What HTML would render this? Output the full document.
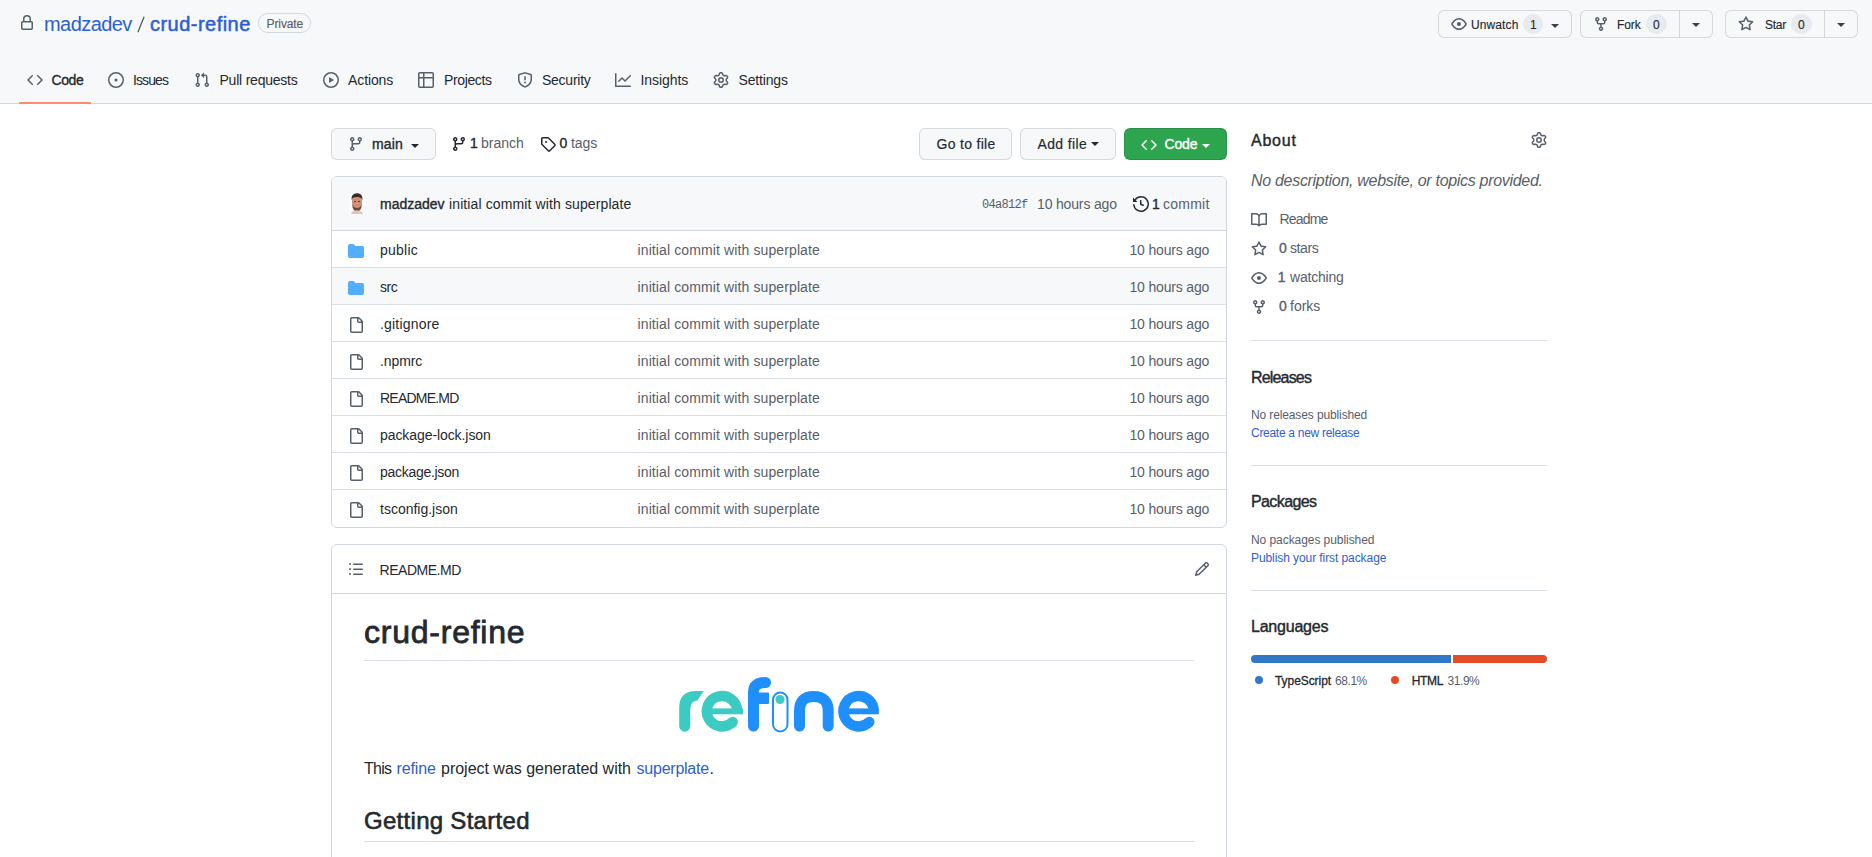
<!DOCTYPE html><html><head><meta charset="utf-8"><style>*{margin:0;padding:0}
html,body{width:1872px;height:857px;overflow:hidden;background:#fff}
body{position:relative;font-family:"Liberation Sans",sans-serif;color:#24292f}
.t{position:absolute;white-space:pre;line-height:1}
.b{position:absolute}
.i{position:absolute;overflow:visible}
</style></head><body><div class="b" style="left:0px;top:0px;width:1872px;height:103px;background:#f6f8fa"></div><div class="b" style="left:0px;top:103px;width:1872px;height:1px;background:#d0d7de"></div><svg class="i" style="left:19px;top:15px;width:16px;height:16px" viewBox="0 0 16 16" fill="#57606a"><path d="M4 4a4 4 0 0 1 8 0v2h.25c.966 0 1.75.784 1.75 1.75v5.5A1.75 1.75 0 0 1 12.25 15h-8.5A1.75 1.75 0 0 1 2 13.25v-5.5C2 6.784 2.784 6 3.75 6H4Zm8.25 3.5h-8.5a.25.25 0 0 0-.25.25v5.5c0 .138.112.25.25.25h8.5a.25.25 0 0 0 .25-.25v-5.5a.25.25 0 0 0-.25-.25ZM10.5 6V4a2.5 2.5 0 1 0-5 0v2Z"/></svg><span class="t" style="left:44.0px;top:14.1px;font-size:20px;color:#2c5fd2;letter-spacing:-0.569px;">madzadev</span><svg class="i" style="left:130px;top:10px;width:20px;height:30px" viewBox="130 10 20 30"><path d="M137.9 32.2 L144.1 16.8" stroke="#57606a" stroke-width="1.35"/></svg><span class="t" style="left:150.0px;top:14.1px;font-size:20px;color:#2c5fd2;-webkit-text-stroke:0.50px #2c5fd2;letter-spacing:0.469px;">crud-refine</span><div class="b" style="left:258px;top:13px;width:53px;height:20px;border:1px solid #d0d7de;border-radius:10px;box-sizing:border-box"></div><span class="t" style="left:266.5px;top:17.8px;font-size:12px;color:#57606a;-webkit-text-stroke:0.14px #57606a;letter-spacing:-0.093px;">Private</span><div class="b" style="left:1438px;top:10px;width:134px;height:28px;background:#f6f8fa;border:1px solid rgba(31,35,40,0.15);border-radius:6px;box-sizing:border-box"></div><svg class="i" style="left:1451px;top:16px;width:16px;height:16px" viewBox="0 0 16 16" fill="#57606a"><path d="M8 2c1.981 0 3.671.992 4.933 2.078 1.27 1.091 2.187 2.345 2.637 3.023a1.62 1.62 0 0 1 0 1.798c-.45.678-1.367 1.932-2.637 3.023C11.67 13.008 9.981 14 8 14c-1.981 0-3.671-.992-4.933-2.078C1.797 10.83.88 9.576.43 8.898a1.62 1.62 0 0 1 0-1.798c.45-.677 1.367-1.931 2.637-3.022C4.33 2.992 6.019 2 8 2ZM1.679 7.932a.12.12 0 0 0 0 .136c.411.622 1.241 1.75 2.366 2.717C5.176 11.758 6.527 12.5 8 12.5c1.473 0 2.825-.742 3.955-1.715 1.124-.967 1.954-2.096 2.366-2.717a.12.12 0 0 0 0-.136c-.412-.621-1.242-1.75-2.366-2.717C10.824 4.242 9.473 3.5 8 3.5c-1.473 0-2.825.742-3.955 1.715-1.124.967-1.954 2.096-2.366 2.717ZM8 10a2 2 0 1 1-.001-3.999A2 2 0 0 1 8 10Z"/></svg><span class="t" style="left:1471.0px;top:19.3px;font-size:12px;color:#24292f;-webkit-text-stroke:0.14px #24292f;letter-spacing:0.102px;">Unwatch</span><div class="b" style="left:1523px;top:14px;width:20px;height:20px;background:rgba(175,184,193,0.2);border-radius:10px"></div><span class="t" style="left:1530.0px;top:19.3px;font-size:12px;color:#24292f;-webkit-text-stroke:0.14px #24292f;">1</span><div class="b" style="left:1551px;top:23.5px;width:0;height:0;border-left:4.0px solid transparent;border-right:4.0px solid transparent;border-top:4.0px solid #3b4148"></div><div class="b" style="left:1580px;top:10px;width:133px;height:28px;background:#f6f8fa;border:1px solid rgba(31,35,40,0.15);border-radius:6px;box-sizing:border-box"></div><div class="b" style="left:1679px;top:11px;width:1px;height:26px;background:#d5d8db"></div><svg class="i" style="left:1593px;top:16px;width:16px;height:16px" viewBox="0 0 16 16" fill="#57606a"><path d="M5 5.372v.878c0 .414.336.75.75.75h4.5a.75.75 0 0 0 .75-.75v-.878a2.25 2.25 0 1 1 1.5 0v.878a2.25 2.25 0 0 1-2.25 2.25h-1.5v2.128a2.251 2.251 0 1 1-1.5 0V8.5h-1.5A2.25 2.25 0 0 1 3.5 6.25v-.878a2.25 2.250 0 1 1 1.5 0ZM5 3.25a.75.75 0 1 0-1.5 0 .75.75 0 0 0 1.5 0Zm6.75.75a.75.75 0 1 0 0-1.5.75.75 0 0 0 0 1.5Zm-3 8.75a.75.75 0 1 0-1.5 0 .75.75 0 0 0 1.5 0Z"/></svg><span class="t" style="left:1617.0px;top:19.3px;font-size:12px;color:#24292f;-webkit-text-stroke:0.14px #24292f;letter-spacing:-0.067px;">Fork</span><div class="b" style="left:1646px;top:14px;width:21px;height:20px;background:rgba(175,184,193,0.2);border-radius:10px"></div><span class="t" style="left:1653.0px;top:19.3px;font-size:12px;color:#24292f;-webkit-text-stroke:0.14px #24292f;">0</span><div class="b" style="left:1692px;top:22.6px;width:0;height:0;border-left:4.0px solid transparent;border-right:4.0px solid transparent;border-top:4.0px solid #3b4148"></div><div class="b" style="left:1725px;top:10px;width:133px;height:28px;background:#f6f8fa;border:1px solid rgba(31,35,40,0.15);border-radius:6px;box-sizing:border-box"></div><div class="b" style="left:1824px;top:11px;width:1px;height:26px;background:#d5d8db"></div><svg class="i" style="left:1738px;top:16px;width:16px;height:16px" viewBox="0 0 16 16" fill="#57606a"><path d="M8 .25a.75.75 0 0 1 .673.418l1.882 3.815 4.21.612a.75.75 0 0 1 .416 1.279l-3.046 2.97.719 4.192a.751.751 0 0 1-1.088.791L8 12.347l-3.766 1.98a.75.75 0 0 1-1.088-.79l.72-4.194L.818 6.374a.75.75 0 0 1 .416-1.28l4.21-.611L7.327.668A.75.75 0 0 1 8 .25Zm0 2.445L6.615 5.5a.75.75 0 0 1-.564.41l-3.097.45 2.24 2.184a.75.75 0 0 1 .216.664l-.528 3.084 2.769-1.456a.75.75 0 0 1 .698 0l2.770 1.456-.53-3.084a.75.75 0 0 1 .216-.664l2.24-2.183-3.096-.45a.75.75 0 0 1-.564-.41L8 2.694Z"/></svg><span class="t" style="left:1765.0px;top:19.3px;font-size:12px;color:#24292f;-webkit-text-stroke:0.14px #24292f;letter-spacing:-0.239px;">Star</span><div class="b" style="left:1791px;top:14px;width:21px;height:20px;background:rgba(175,184,193,0.2);border-radius:10px"></div><span class="t" style="left:1798.0px;top:19.3px;font-size:12px;color:#24292f;-webkit-text-stroke:0.14px #24292f;">0</span><div class="b" style="left:1837px;top:22.6px;width:0;height:0;border-left:4.0px solid transparent;border-right:4.0px solid transparent;border-top:4.0px solid #3b4148"></div><svg class="i" style="left:27px;top:72px;width:16px;height:16px" viewBox="0 0 16 16" fill="#57606a"><path d="m11.28 3.22 4.25 4.25a.75.75 0 0 1 0 1.06l-4.25 4.25a.749.749 0 0 1-1.275-.326.749.749 0 0 1 .215-.734L13.94 8l-3.72-3.72a.749.749 0 0 1 .326-1.275.749.749 0 0 1 .734.215Zm-6.56 0a.751.751 0 0 1 1.042.018.751.751 0 0 1 .018 1.042L2.06 8l3.72 3.72a.749.749 0 0 1-.326 1.275.749.749 0 0 1-.734-.215L.47 8.53a.75.75 0 0 1 0-1.06Z"/></svg><span class="t" style="left:51.5px;top:73.3px;font-size:14px;color:#24292f;-webkit-text-stroke:0.35px #24292f;letter-spacing:-0.390px;">Code</span><svg class="i" style="left:108px;top:72px;width:16px;height:16px" viewBox="0 0 16 16" fill="#57606a"><path d="M8 9.5a1.5 1.5 0 1 0 0-3 1.5 1.5 0 0 0 0 3ZM8 0a8 8 0 1 1 0 16A8 8 0 0 1 8 0ZM1.5 8a6.5 6.5 0 1 0 13 0 6.5 6.5 0 0 0-13 0Z"/></svg><span class="t" style="left:133.0px;top:73.3px;font-size:14px;color:#24292f;letter-spacing:-0.894px;">Issues</span><svg class="i" style="left:193.5px;top:72px;width:16px;height:16px" viewBox="0 0 16 16" fill="#57606a"><path d="M1.5 3.25a2.25 2.25 0 1 1 3 2.122v5.256a2.251 2.251 0 1 1-1.5 0V5.372A2.25 2.25 0 0 1 1.5 3.25Zm5.677-.177L9.573.677A.25.25 0 0 1 10 .854V2.5h1A2.5 2.5 0 0 1 13.5 5v5.628a2.251 2.251 0 1 1-1.5 0V5a1 1 0 0 0-1-1h-1v1.646a.25.25 0 0 1-.427.177L7.177 3.427a.25.25 0 0 1 0-.354ZM3.75 2.5a.75.75 0 1 0 0 1.5.75.75 0 0 0 0-1.5Zm0 9.5a.75.75 0 1 0 0 1.5.75.75 0 0 0 0-1.5Zm8.25.75a.75.75 0 1 0 1.5 0 .75.75 0 0 0-1.5 0Z"/></svg><span class="t" style="left:219.5px;top:73.3px;font-size:14px;color:#24292f;letter-spacing:-0.220px;">Pull requests</span><svg class="i" style="left:322.5px;top:72px;width:16px;height:16px" viewBox="0 0 16 16" fill="#57606a"><path d="M8 0a8 8 0 1 1 0 16A8 8 0 0 1 8 0ZM1.5 8a6.5 6.5 0 1 0 13 0 6.5 6.5 0 0 0-13 0Zm4.879-2.773 4.264 2.559a.25.25 0 0 1 0 .428l-4.264 2.559A.25.25 0 0 1 6 10.559V5.442a.25.25 0 0 1 .379-.215Z"/></svg><span class="t" style="left:348.0px;top:73.3px;font-size:14px;color:#24292f;letter-spacing:-0.104px;">Actions</span><svg class="i" style="left:418px;top:72px;width:16px;height:16px" viewBox="0 0 16 16" fill="#57606a"><path d="M0 1.75C0 .784.784 0 1.75 0h12.5C15.216 0 16 .784 16 1.75v12.5A1.75 1.75 0 0 1 14.25 16H1.75A1.75 1.75 0 0 1 0 14.25ZM6.5 6.5v8h7.75a.25.25 0 0 0 .25-.25V6.5Zm8-1.5V1.75a.25.25 0 0 0-.25-.25H6.5V5Zm-13 1.5v7.75c0 .138.112.25.25.25H5v-8ZM5 5V1.5H1.75a.25.25 0 0 0-.25.25V5Z"/></svg><span class="t" style="left:444.0px;top:73.3px;font-size:14px;color:#24292f;letter-spacing:-0.368px;">Projects</span><svg class="i" style="left:516.8px;top:72px;width:16px;height:16px" viewBox="0 0 16 16" fill="#57606a"><path d="M7.467.133a1.748 1.748 0 0 1 1.066 0l5.25 1.68A1.75 1.75 0 0 1 15 3.48V7c0 1.566-.32 3.182-1.303 4.682-.983 1.498-2.585 2.813-5.032 3.855a1.697 1.697 0 0 1-1.33 0c-2.447-1.042-4.049-2.357-5.032-3.855C1.32 10.182 1 8.566 1 7V3.48a1.755 1.755 0 0 1 1.217-1.667Zm.61 1.429a.25.25 0 0 0-.153 0l-5.25 1.68a.25.25 0 0 0-.174.238V7c0 1.358.275 2.666 1.057 3.86.784 1.194 2.121 2.34 4.366 3.297a.196.196 0 0 0 .154 0c2.245-.956 3.582-2.104 4.366-3.298C13.225 9.666 13.5 8.36 13.5 7V3.48a.251.251 0 0 0-.174-.237l-5.25-1.68ZM8.75 4.75v3a.75.75 0 0 1-1.5 0v-3a.75.75 0 0 1 1.5 0ZM9 10.5a1 1 0 1 1-2 0 1 1 0 0 1 2 0Z"/></svg><span class="t" style="left:542.0px;top:73.3px;font-size:14px;color:#24292f;letter-spacing:-0.254px;">Security</span><svg class="i" style="left:615px;top:72px;width:16px;height:16px" viewBox="0 0 16 16" fill="#57606a"><path d="M1.5 1.75V13.5h13.75a.75.75 0 0 1 0 1.5H.75a.75.75 0 0 1-.75-.75V1.75a.75.75 0 0 1 1.5 0Zm14.28 2.53-5.25 5.25a.75.75 0 0 1-1.06 0L7 7.06 4.28 9.78a.751.751 0 0 1-1.042-.018.751.751 0 0 1-.018-1.042l3.25-3.25a.75.75 0 0 1 1.06 0L10 7.94l4.72-4.72a.751.751 0 0 1 1.042.018.751.751 0 0 1 .018 1.042Z"/></svg><span class="t" style="left:640.5px;top:73.3px;font-size:14px;color:#24292f;letter-spacing:-0.079px;">Insights</span><svg class="i" style="left:713px;top:72px;width:16px;height:16px" viewBox="0 0 16 16" fill="#57606a"><path d="M8 0a8.2 8.2 0 0 1 .701.031C9.444.095 9.99.645 10.16 1.29l.288 1.107c.018.066.079.158.212.224.231.114.454.243.668.386.123.082.233.09.299.071l1.103-.303c.644-.176 1.392.021 1.82.63.27.385.506.792.704 1.218.315.675.111 1.422-.364 1.891l-.814.806c-.049.048-.098.147-.088.294.016.257.016.515 0 .772-.01.147.038.246.088.294l.814.806c.475.469.679 1.216.364 1.891a7.977 7.977 0 0 1-.704 1.217c-.428.61-1.176.807-1.82.63l-1.102-.302c-.067-.019-.177-.011-.3.071a5.909 5.909 0 0 1-.668.386c-.133.066-.194.158-.211.224l-.29 1.106c-.168.646-.715 1.196-1.458 1.26a8.006 8.006 0 0 1-1.402 0c-.743-.064-1.289-.614-1.458-1.26l-.289-1.106c-.018-.066-.079-.158-.212-.224a5.738 5.738 0 0 1-.668-.386c-.123-.082-.233-.09-.299-.071l-1.103.303c-.644.176-1.392-.021-1.820-.63a8.12 8.12 0 0 1-.704-1.218c-.315-.675-.111-1.422.363-1.891l.815-.806c.05-.048.098-.147.088-.294a6.214 6.214 0 0 1 0-.772c.01-.147-.038-.246-.088-.294l-.815-.806C.635 6.045.431 5.298.746 4.623a7.920 7.920 0 0 1 .704-1.217c.428-.61 1.176-.807 1.820-.63l1.102.302c.067.019.177.011.3-.071.214-.143.437-.272.668-.386.133-.066.194-.158.211-.224l.29-1.106C6.009.645 6.556.095 7.299.03 7.530.01 7.764 0 8 0Zm-.571 1.525c-.036.003-.108.036-.137.146l-.289 1.105c-.147.561-.549.967-.998 1.189-.173.086-.34.183-.5.29-.417.278-.97.423-1.529.27l-1.103-.303c-.109-.03-.175.016-.195.045-.22.312-.412.644-.573.99-.014.031-.021.11.059.19l.815.806c.411.406.562.957.53 1.456a4.709 4.709 0 0 0 0 .582c.032.499-.119 1.05-.53 1.456l-.815.806c-.081.08-.073.159-.059.19.162.346.353.677.573.989.02.03.085.076.195.046l1.102-.303c.56-.153 1.113-.008 1.53.27.161.107.328.204.501.29.447.222.85.629.997 1.189l.289 1.105c.029.109.101.143.137.146a6.6 6.6 0 0 0 1.142 0c.036-.003.108-.036.137-.146l.289-1.105c.147-.561.549-.967.998-1.189.173-.086.34-.183.5-.29.417-.278.97-.423 1.529-.27l1.103.303c.109.029.175-.016.195-.045.22-.313.411-.644.573-.99.014-.031.021-.11-.059-.19l-.815-.806c-.411-.406-.562-.957-.53-1.456a4.709 4.709 0 0 0 0-.582c-.032-.499.119-1.05.53-1.456l.815-.806c.081-.08.073-.159.059-.19a6.464 6.464 0 0 0-.573-.989c-.02-.03-.085-.076-.195-.046l-1.102.303c-.56.153-1.113.008-1.53-.27a4.44 4.44 0 0 0-.501-.29c-.447-.222-.85-.629-.997-1.189l-.289-1.105c-.029-.11-.101-.143-.137-.146a6.6 6.6 0 0 0-1.142 0ZM11 8a3 3 0 1 1-6 0 3 3 0 0 1 6 0ZM9.5 8a1.5 1.5 0 1 0-3.001.001A1.5 1.5 0 0 0 9.5 8Z"/></svg><span class="t" style="left:738.5px;top:73.3px;font-size:14px;color:#24292f;letter-spacing:-0.156px;">Settings</span><div class="b" style="left:19px;top:102px;width:72px;height:2px;background:#fd8c73"></div><div class="b" style="left:331px;top:128px;width:105px;height:32px;background:#f6f8fa;border:1px solid rgba(31,35,40,0.15);border-radius:6px;box-sizing:border-box"></div><svg class="i" style="left:348px;top:136px;width:16px;height:16px" viewBox="0 0 16 16" fill="#57606a"><path d="M9.5 3.25a2.25 2.25 0 1 1 3 2.122V6A2.5 2.5 0 0 1 10 8.5H6a1 1 0 0 0-1 1v1.128a2.251 2.251 0 1 1-1.5 0V5.372a2.25 2.25 0 1 1 1.5 0v1.836A2.493 2.493 0 0 1 6 7h4a1 1 0 0 0 1-1v-.628A2.25 2.25 0 0 1 9.5 3.25Zm-6 0a.75.75 0 1 0 1.5 0 .75.75 0 0 0-1.5 0Zm8.25-.75a.75.75 0 1 0 0 1.5.75.75 0 0 0 0-1.5ZM4.25 12a.75.75 0 1 0 0 1.5.75.75 0 0 0 0-1.5Z"/></svg><span class="t" style="left:372.0px;top:136.9px;font-size:14px;color:#24292f;-webkit-text-stroke:0.35px #24292f;letter-spacing:0.147px;">main</span><div class="b" style="left:411px;top:144px;width:0;height:0;border-left:4.0px solid transparent;border-right:4.0px solid transparent;border-top:4.0px solid #24292f"></div><svg class="i" style="left:451px;top:135.5px;width:16px;height:16px" viewBox="0 0 16 16" fill="#24292f"><path d="M9.5 3.25a2.25 2.25 0 1 1 3 2.122V6A2.5 2.5 0 0 1 10 8.5H6a1 1 0 0 0-1 1v1.128a2.251 2.251 0 1 1-1.5 0V5.372a2.25 2.25 0 1 1 1.5 0v1.836A2.493 2.493 0 0 1 6 7h4a1 1 0 0 0 1-1v-.628A2.25 2.25 0 0 1 9.5 3.25Zm-6 0a.75.75 0 1 0 1.5 0 .75.75 0 0 0-1.5 0Zm8.25-.75a.75.75 0 1 0 0 1.5.75.75 0 0 0 0-1.5ZM4.25 12a.75.75 0 1 0 0 1.5.75.75 0 0 0 0-1.5Z"/></svg><span class="t" style="left:470.0px;top:136.4px;font-size:14px;color:#24292f;-webkit-text-stroke:0.35px #24292f;">1</span><span class="t" style="left:481.0px;top:136.4px;font-size:14px;color:#57606a;letter-spacing:-0.003px;">branch</span><svg class="i" style="left:540px;top:135.5px;width:16px;height:16px" viewBox="0 0 16 16" fill="#24292f"><path d="M1 7.775V2.75C1 1.784 1.784 1 2.750 1h5.025c.464 0 .91.184 1.238.513l6.25 6.25a1.75 1.75 0 0 1 0 2.474l-5.026 5.026a1.75 1.75 0 0 1-2.474 0l-6.25-6.25A1.752 1.752 0 0 1 1 7.775Zm1.5 0c0 .066.026.13.073.177l6.25 6.25a.25.25 0 0 0 .354 0l5.025-5.025a.25.25 0 0 0 0-.354l-6.25-6.25a.25.25 0 0 0-.177-.073H2.75a.25.25 0 0 0-.25.25ZM6 5a1 1 0 1 1 0 2 1 1 0 0 1 0-2Z"/></svg><span class="t" style="left:559.5px;top:136.4px;font-size:14px;color:#24292f;-webkit-text-stroke:0.35px #24292f;">0</span><span class="t" style="left:571.0px;top:136.4px;font-size:14px;color:#57606a;letter-spacing:-0.056px;">tags</span><div class="b" style="left:919px;top:128px;width:93px;height:32px;background:#f6f8fa;border:1px solid rgba(31,35,40,0.15);border-radius:6px;box-sizing:border-box"></div><span class="t" style="left:936.5px;top:136.9px;font-size:14px;color:#24292f;-webkit-text-stroke:0.17px #24292f;letter-spacing:0.308px;">Go to file</span><div class="b" style="left:1020px;top:128px;width:96px;height:32px;background:#f6f8fa;border:1px solid rgba(31,35,40,0.15);border-radius:6px;box-sizing:border-box"></div><span class="t" style="left:1037.5px;top:136.9px;font-size:14px;color:#24292f;-webkit-text-stroke:0.17px #24292f;letter-spacing:0.371px;">Add file</span><div class="b" style="left:1091px;top:142px;width:0;height:0;border-left:4.0px solid transparent;border-right:4.0px solid transparent;border-top:4.0px solid #24292f"></div><div class="b" style="left:1124px;top:128px;width:103px;height:32px;background:#2da44e;border:1px solid rgba(31,35,40,0.15);border-radius:6px;box-sizing:border-box"></div><svg class="i" style="left:1141px;top:137px;width:16px;height:16px" viewBox="0 0 16 16" fill="#ffffff"><path d="m11.28 3.22 4.25 4.25a.75.75 0 0 1 0 1.06l-4.25 4.25a.749.749 0 0 1-1.275-.326.749.749 0 0 1 .215-.734L13.94 8l-3.72-3.72a.749.749 0 0 1 .326-1.275.749.749 0 0 1 .734.215Zm-6.56 0a.751.751 0 0 1 1.042.018.751.751 0 0 1 .018 1.042L2.06 8l3.72 3.72a.749.749 0 0 1-.326 1.275.749.749 0 0 1-.734-.215L.47 8.53a.75.75 0 0 1 0-1.06Z"/></svg><span class="t" style="left:1164.5px;top:136.9px;font-size:14px;color:#ffffff;-webkit-text-stroke:0.35px #ffffff;letter-spacing:-0.156px;">Code</span><div class="b" style="left:1202px;top:143.5px;width:0;height:0;border-left:4.0px solid transparent;border-right:4.0px solid transparent;border-top:4.0px solid #ffffff"></div><div class="b" style="left:331px;top:176px;width:896px;height:352px;border:1px solid #d0d7de;border-radius:6px;box-sizing:border-box;overflow:hidden"></div><div class="b" style="left:332px;top:177px;width:894px;height:53px;background:#f6f8fa;border-radius:5px 5px 0 0"></div><div class="b" style="left:331px;top:230px;width:896px;height:1px;background:#d0d7de"></div><svg class="i" style="left:349px;top:192px;width:16px;height:23px" viewBox="0 0 16 23">
<rect x="0.5" y="0" width="15" height="23" rx="6" fill="#ffffff" opacity="0.7"/>
<path d="M3 9 Q2 2 8 1.5 Q14 2 13 9 L13 14 Q12 19 8 19 Q4 19 3 14Z" fill="#cf9078"/>
<path d="M2.5 8 Q2 1.5 8 1.3 Q14 1.5 13.5 8 L12.5 6 Q8 4 3.5 6Z" fill="#3a2a28"/>
<path d="M3.5 13 Q4 19.5 8 19.5 Q12 19.5 12.5 13 Q11 16 8 16 Q5 16 3.5 13Z" fill="#6b4a40"/>
<path d="M5 9.5h2M9 9.5h2" stroke="#5a3a30" stroke-width="1"/>
<path d="M2 22 Q3 18 8 18.5 Q13 18 14 22Z" fill="#e8c4b4"/>
</svg><span class="t" style="left:380.0px;top:197.1px;font-size:14px;color:#24292f;-webkit-text-stroke:0.35px #24292f;letter-spacing:0.001px;">madzadev</span><span class="t" style="left:449.0px;top:197.1px;font-size:14px;color:#24292f;letter-spacing:0.115px;">initial commit with superplate</span><span class="t" style="left:982.0px;top:199.3px;font-size:12px;color:#57606a;font-family:'Liberation Mono', monospace;letter-spacing:-0.687px;">04a812f</span><span class="t" style="left:1037.0px;top:196.6px;font-size:14px;color:#57606a;letter-spacing:-0.158px;">10 hours ago</span><svg class="i" style="left:1132.5px;top:196px;width:16px;height:16px" viewBox="0 0 16 16" fill="#24292f"><path d="m.427 1.927 1.215 1.215a8.002 8.002 0 1 1-1.6 5.685.75.75 0 1 1 1.493-.154 6.5 6.5 0 1 0 1.18-4.458l1.358 1.358A.25.25 0 0 1 3.896 6H.25A.25.25 0 0 1 0 5.75V2.104a.25.25 0 0 1 .427-.177ZM7.75 4a.75.75 0 0 1 .75.75v2.992l2.028.812a.75.75 0 0 1-.557 1.392l-2.5-1A.751.751 0 0 1 7 8.25v-3.5A.75.75 0 0 1 7.75 4Z"/></svg><span class="t" style="left:1152.0px;top:196.6px;font-size:14px;color:#24292f;-webkit-text-stroke:0.35px #24292f;">1</span><span class="t" style="left:1163.0px;top:196.6px;font-size:14px;color:#57606a;letter-spacing:0.235px;">commit</span><svg class="i" style="left:348px;top:243px;width:16px;height:16px" viewBox="0 0 16 16" fill="#54aeff"><path d="M1.75 1A1.75 1.75 0 0 0 0 2.75v10.5C0 14.216.784 15 1.75 15h12.5A1.75 1.75 0 0 0 16 13.25v-8.5A1.75 1.75 0 0 0 14.25 3H7.5a.25.25 0 0 1-.2-.1l-.9-1.2C6.07 1.26 5.55 1 5 1H1.75Z"/></svg><span class="t" style="left:380.0px;top:243.1px;font-size:14px;color:#24292f;letter-spacing:0.241px;">public</span><span class="t" style="left:637.5px;top:243.1px;font-size:14px;color:#57606a;letter-spacing:0.115px;">initial commit with superplate</span><span class="t" style="left:1129.5px;top:243.1px;font-size:14px;color:#57606a;letter-spacing:-0.176px;">10 hours ago</span><div class="b" style="left:332px;top:267px;width:894px;height:1px;background:#d8dee4"></div><div class="b" style="left:332px;top:268px;width:894px;height:36px;background:#f6f8fa"></div><svg class="i" style="left:348px;top:280px;width:16px;height:16px" viewBox="0 0 16 16" fill="#54aeff"><path d="M1.75 1A1.75 1.75 0 0 0 0 2.75v10.5C0 14.216.784 15 1.75 15h12.5A1.75 1.75 0 0 0 16 13.25v-8.5A1.75 1.75 0 0 0 14.25 3H7.5a.25.25 0 0 1-.2-.1l-.9-1.2C6.07 1.26 5.55 1 5 1H1.75Z"/></svg><span class="t" style="left:380.0px;top:280.1px;font-size:14px;color:#24292f;letter-spacing:-0.436px;">src</span><span class="t" style="left:637.5px;top:280.1px;font-size:14px;color:#57606a;letter-spacing:0.115px;">initial commit with superplate</span><span class="t" style="left:1129.5px;top:280.1px;font-size:14px;color:#57606a;letter-spacing:-0.176px;">10 hours ago</span><div class="b" style="left:332px;top:304px;width:894px;height:1px;background:#d8dee4"></div><svg class="i" style="left:347.5px;top:316.5px;width:16px;height:16px" viewBox="0 0 16 16" fill="#57606a"><path d="M2 1.75C2 .784 2.784 0 3.75 0h6.586c.464 0 .909.184 1.237.513l2.914 2.914c.329.328.513.773.513 1.237v9.586A1.75 1.75 0 0 1 13.25 16h-9.5A1.75 1.75 0 0 1 2 14.25Zm1.75-.25a.25.25 0 0 0-.25.25v12.5c0 .138.112.25.25.25h9.5a.25.25 0 0 0 .25-.25V6h-2.75A1.75 1.75 0 0 1 9 4.25V1.5Zm6.75.062V4.25c0 .138.112.25.25.25h2.688l-.011-.013-2.914-2.914-.013-.011Z"/></svg><span class="t" style="left:380.0px;top:317.1px;font-size:14px;color:#24292f;letter-spacing:0.190px;">.gitignore</span><span class="t" style="left:637.5px;top:317.1px;font-size:14px;color:#57606a;letter-spacing:0.115px;">initial commit with superplate</span><span class="t" style="left:1129.5px;top:317.1px;font-size:14px;color:#57606a;letter-spacing:-0.176px;">10 hours ago</span><div class="b" style="left:332px;top:341px;width:894px;height:1px;background:#d8dee4"></div><svg class="i" style="left:347.5px;top:353.5px;width:16px;height:16px" viewBox="0 0 16 16" fill="#57606a"><path d="M2 1.75C2 .784 2.784 0 3.75 0h6.586c.464 0 .909.184 1.237.513l2.914 2.914c.329.328.513.773.513 1.237v9.586A1.75 1.75 0 0 1 13.25 16h-9.5A1.75 1.75 0 0 1 2 14.25Zm1.75-.25a.25.25 0 0 0-.25.25v12.5c0 .138.112.25.25.25h9.5a.25.25 0 0 0 .25-.25V6h-2.75A1.75 1.75 0 0 1 9 4.25V1.5Zm6.75.062V4.25c0 .138.112.25.25.25h2.688l-.011-.013-2.914-2.914-.013-.011Z"/></svg><span class="t" style="left:380.0px;top:354.1px;font-size:14px;color:#24292f;letter-spacing:-0.099px;">.npmrc</span><span class="t" style="left:637.5px;top:354.1px;font-size:14px;color:#57606a;letter-spacing:0.115px;">initial commit with superplate</span><span class="t" style="left:1129.5px;top:354.1px;font-size:14px;color:#57606a;letter-spacing:-0.176px;">10 hours ago</span><div class="b" style="left:332px;top:378px;width:894px;height:1px;background:#d8dee4"></div><svg class="i" style="left:347.5px;top:390.5px;width:16px;height:16px" viewBox="0 0 16 16" fill="#57606a"><path d="M2 1.75C2 .784 2.784 0 3.75 0h6.586c.464 0 .909.184 1.237.513l2.914 2.914c.329.328.513.773.513 1.237v9.586A1.75 1.75 0 0 1 13.25 16h-9.5A1.75 1.75 0 0 1 2 14.25Zm1.75-.25a.25.25 0 0 0-.25.25v12.5c0 .138.112.25.25.25h9.5a.25.25 0 0 0 .25-.25V6h-2.75A1.75 1.75 0 0 1 9 4.25V1.5Zm6.75.062V4.25c0 .138.112.25.25.25h2.688l-.011-.013-2.914-2.914-.013-.011Z"/></svg><span class="t" style="left:380.0px;top:391.1px;font-size:14px;color:#24292f;letter-spacing:-0.783px;">README.MD</span><span class="t" style="left:637.5px;top:391.1px;font-size:14px;color:#57606a;letter-spacing:0.115px;">initial commit with superplate</span><span class="t" style="left:1129.5px;top:391.1px;font-size:14px;color:#57606a;letter-spacing:-0.176px;">10 hours ago</span><div class="b" style="left:332px;top:415px;width:894px;height:1px;background:#d8dee4"></div><svg class="i" style="left:347.5px;top:427.5px;width:16px;height:16px" viewBox="0 0 16 16" fill="#57606a"><path d="M2 1.75C2 .784 2.784 0 3.75 0h6.586c.464 0 .909.184 1.237.513l2.914 2.914c.329.328.513.773.513 1.237v9.586A1.75 1.75 0 0 1 13.25 16h-9.5A1.75 1.75 0 0 1 2 14.25Zm1.75-.25a.25.25 0 0 0-.25.25v12.5c0 .138.112.25.25.25h9.5a.25.25 0 0 0 .25-.25V6h-2.75A1.75 1.75 0 0 1 9 4.25V1.5Zm6.75.062V4.25c0 .138.112.25.25.25h2.688l-.011-.013-2.914-2.914-.013-.011Z"/></svg><span class="t" style="left:380.0px;top:428.1px;font-size:14px;color:#24292f;letter-spacing:-0.079px;">package-lock.json</span><span class="t" style="left:637.5px;top:428.1px;font-size:14px;color:#57606a;letter-spacing:0.115px;">initial commit with superplate</span><span class="t" style="left:1129.5px;top:428.1px;font-size:14px;color:#57606a;letter-spacing:-0.176px;">10 hours ago</span><div class="b" style="left:332px;top:452px;width:894px;height:1px;background:#d8dee4"></div><svg class="i" style="left:347.5px;top:464.5px;width:16px;height:16px" viewBox="0 0 16 16" fill="#57606a"><path d="M2 1.75C2 .784 2.784 0 3.75 0h6.586c.464 0 .909.184 1.237.513l2.914 2.914c.329.328.513.773.513 1.237v9.586A1.75 1.75 0 0 1 13.25 16h-9.5A1.75 1.75 0 0 1 2 14.25Zm1.75-.25a.25.25 0 0 0-.25.25v12.5c0 .138.112.25.25.25h9.5a.25.25 0 0 0 .25-.25V6h-2.75A1.75 1.75 0 0 1 9 4.25V1.5Zm6.75.062V4.25c0 .138.112.25.25.25h2.688l-.011-.013-2.914-2.914-.013-.011Z"/></svg><span class="t" style="left:380.0px;top:465.1px;font-size:14px;color:#24292f;letter-spacing:-0.292px;">package.json</span><span class="t" style="left:637.5px;top:465.1px;font-size:14px;color:#57606a;letter-spacing:0.115px;">initial commit with superplate</span><span class="t" style="left:1129.5px;top:465.1px;font-size:14px;color:#57606a;letter-spacing:-0.176px;">10 hours ago</span><div class="b" style="left:332px;top:489px;width:894px;height:1px;background:#d8dee4"></div><svg class="i" style="left:347.5px;top:501.5px;width:16px;height:16px" viewBox="0 0 16 16" fill="#57606a"><path d="M2 1.75C2 .784 2.784 0 3.75 0h6.586c.464 0 .909.184 1.237.513l2.914 2.914c.329.328.513.773.513 1.237v9.586A1.75 1.75 0 0 1 13.25 16h-9.5A1.75 1.75 0 0 1 2 14.25Zm1.75-.25a.25.25 0 0 0-.25.25v12.5c0 .138.112.25.25.25h9.5a.25.25 0 0 0 .25-.25V6h-2.75A1.75 1.75 0 0 1 9 4.25V1.5Zm6.75.062V4.25c0 .138.112.25.25.25h2.688l-.011-.013-2.914-2.914-.013-.011Z"/></svg><span class="t" style="left:380.0px;top:502.1px;font-size:14px;color:#24292f;letter-spacing:-0.002px;">tsconfig.json</span><span class="t" style="left:637.5px;top:502.1px;font-size:14px;color:#57606a;letter-spacing:0.115px;">initial commit with superplate</span><span class="t" style="left:1129.5px;top:502.1px;font-size:14px;color:#57606a;letter-spacing:-0.176px;">10 hours ago</span><div class="b" style="left:331px;top:544px;width:896px;height:400px;border:1px solid #d0d7de;border-radius:6px;box-sizing:border-box"></div><div class="b" style="left:331px;top:593px;width:896px;height:1px;background:#d0d7de"></div><svg class="i" style="left:347.5px;top:561.2px;width:16px;height:16px" viewBox="0 0 16 16" fill="#57606a"><path d="M5.75 2.5h8.5a.75.75 0 0 1 0 1.5h-8.5a.75.75 0 0 1 0-1.5Zm0 5h8.5a.75.75 0 0 1 0 1.5h-8.5a.75.75 0 0 1 0-1.5Zm0 5h8.5a.75.75 0 0 1 0 1.5h-8.5a.75.75 0 0 1 0-1.5ZM2 14a1 1 0 1 1 0-2 1 1 0 0 1 0 2Zm1-6a1 1 0 1 1-2 0 1 1 0 0 1 2 0ZM2 4a1 1 0 1 1 0-2 1 1 0 0 1 0 2Z"/></svg><span class="t" style="left:379.5px;top:563.1px;font-size:14px;color:#24292f;letter-spacing:-0.470px;">README.MD</span><svg class="i" style="left:1194px;top:561px;width:16px;height:16px" viewBox="0 0 16 16" fill="#57606a"><path d="M11.013 1.427a1.75 1.75 0 0 1 2.474 0l1.086 1.086a1.75 1.75 0 0 1 0 2.474l-8.61 8.61c-.21.21-.47.364-.756.445l-3.251.93a.75.75 0 0 1-.927-.928l.929-3.25c.081-.286.235-.547.445-.758l8.61-8.61Zm.176 4.823L9.75 4.81l-6.286 6.287a.253.253 0 0 0-.064.108l-.558 1.953 1.953-.558a.253.253 0 0 0 .108-.064Zm1.238-3.763a.25.25 0 0 0-.354 0L10.811 3.75l1.439 1.44 1.263-1.263a.25.25 0 0 0 0-.354Z"/></svg><span class="t" style="left:364.0px;top:615.9px;font-size:32px;color:#24292f;-webkit-text-stroke:0.80px #24292f;letter-spacing:0.765px;">crud-refine</span><div class="b" style="left:364px;top:660px;width:830px;height:1px;background:#d8dee4"></div><svg class="i" style="left:670px;top:670px;width:220px;height:70px" viewBox="670 670 220 70">
<g fill="none" stroke-linecap="round" stroke-width="11">
<path d="M753.5 726 V692 Q753.5 682.5 765.5 682.5" stroke="#1f8ffb"/>
<path d="M799.5 726 V711 Q799.5 696.5 813.5 696.5 Q828.2 696.5 828.2 711 V726" stroke="#1f8ffb"/>
</g>
<g stroke-width="10.4" fill="none">
<path d="M737.2 711.25 A15.2 15.2 0 1 0 732.7 722" stroke="#3ccbc2"/>
<path d="M873.8 711.25 A15.2 15.2 0 1 0 869.3 722" stroke="#1f8ffb"/>
</g>
<circle cx="732.7" cy="722" r="5.2" fill="#3ccbc2"/>
<circle cx="869.3" cy="722" r="5.2" fill="#1f8ffb"/>
<rect x="710" y="708.4" width="33" height="5.9" fill="#3ccbc2"/>
<rect x="846.6" y="708.4" width="32.2" height="5.9" fill="#1f8ffb"/>
<path d="M679.2 726.2 V708 Q679.2 691.1 696 691.1 H703.8 L697.3 700.6 Q690.3 701.2 690.3 709 V726.2 A5.55 5.55 0 0 1 679.2 726.2 Z" fill="#3ccbc2"/>
<rect x="748" y="692.5" width="21" height="11.5" rx="1" fill="#1f8ffb"/>
<rect x="773" y="692.5" width="14.5" height="39" rx="7.25" fill="none" stroke="#1f8ffb" stroke-width="2"/>
<circle cx="780" cy="699.5" r="4.5" fill="#3ccbc2"/>
</svg><span class="t" style="left:364.0px;top:760.5px;font-size:16px;color:#24292f;letter-spacing:-0.745px;">This</span><span class="t" style="left:396.5px;top:760.5px;font-size:16px;color:#2c5fd2;letter-spacing:-0.126px;">refine</span><span class="t" style="left:441.0px;top:760.5px;font-size:16px;color:#24292f;letter-spacing:-0.013px;">project was generated with</span><span class="t" style="left:636.6px;top:760.5px;font-size:16px;color:#2c5fd2;letter-spacing:-0.247px;">superplate</span><span class="t" style="left:709.6px;top:760.5px;font-size:16px;color:#24292f;">.</span><span class="t" style="left:364.0px;top:808.7px;font-size:24px;color:#24292f;-webkit-text-stroke:0.60px #24292f;letter-spacing:0.290px;">Getting Started</span><div class="b" style="left:364px;top:841px;width:830px;height:1px;background:#d8dee4"></div><span class="t" style="left:1251.0px;top:132.8px;font-size:16px;color:#24292f;-webkit-text-stroke:0.40px #24292f;letter-spacing:0.772px;">About</span><svg class="i" style="left:1531px;top:132px;width:16px;height:16px" viewBox="0 0 16 16" fill="#57606a"><path d="M8 0a8.2 8.2 0 0 1 .701.031C9.444.095 9.99.645 10.16 1.29l.288 1.107c.018.066.079.158.212.224.231.114.454.243.668.386.123.082.233.09.299.071l1.103-.303c.644-.176 1.392.021 1.82.63.27.385.506.792.704 1.218.315.675.111 1.422-.364 1.891l-.814.806c-.049.048-.098.147-.088.294.016.257.016.515 0 .772-.01.147.038.246.088.294l.814.806c.475.469.679 1.216.364 1.891a7.977 7.977 0 0 1-.704 1.217c-.428.61-1.176.807-1.82.63l-1.102-.302c-.067-.019-.177-.011-.3.071a5.909 5.909 0 0 1-.668.386c-.133.066-.194.158-.211.224l-.29 1.106c-.168.646-.715 1.196-1.458 1.26a8.006 8.006 0 0 1-1.402 0c-.743-.064-1.289-.614-1.458-1.26l-.289-1.106c-.018-.066-.079-.158-.212-.224a5.738 5.738 0 0 1-.668-.386c-.123-.082-.233-.09-.299-.071l-1.103.303c-.644.176-1.392-.021-1.820-.63a8.12 8.12 0 0 1-.704-1.218c-.315-.675-.111-1.422.363-1.891l.815-.806c.05-.048.098-.147.088-.294a6.214 6.214 0 0 1 0-.772c.01-.147-.038-.246-.088-.294l-.815-.806C.635 6.045.431 5.298.746 4.623a7.920 7.920 0 0 1 .704-1.217c.428-.61 1.176-.807 1.820-.63l1.102.302c.067.019.177.011.3-.071.214-.143.437-.272.668-.386.133-.066.194-.158.211-.224l.29-1.106C6.009.645 6.556.095 7.299.03 7.530.01 7.764 0 8 0Zm-.571 1.525c-.036.003-.108.036-.137.146l-.289 1.105c-.147.561-.549.967-.998 1.189-.173.086-.34.183-.5.29-.417.278-.97.423-1.529.27l-1.103-.303c-.109-.03-.175.016-.195.045-.22.312-.412.644-.573.99-.014.031-.021.11.059.19l.815.806c.411.406.562.957.53 1.456a4.709 4.709 0 0 0 0 .582c.032.499-.119 1.05-.53 1.456l-.815.806c-.081.08-.073.159-.059.19.162.346.353.677.573.989.02.03.085.076.195.046l1.102-.303c.56-.153 1.113-.008 1.53.27.161.107.328.204.501.29.447.222.85.629.997 1.189l.289 1.105c.029.109.101.143.137.146a6.6 6.6 0 0 0 1.142 0c.036-.003.108-.036.137-.146l.289-1.105c.147-.561.549-.967.998-1.189.173-.086.34-.183.5-.29.417-.278.97-.423 1.529-.27l1.103.303c.109.029.175-.016.195-.045.22-.313.411-.644.573-.99.014-.031.021-.11-.059-.19l-.815-.806c-.411-.406-.562-.957-.53-1.456a4.709 4.709 0 0 0 0-.582c-.032-.499.119-1.05.53-1.456l.815-.806c.081-.08.073-.159.059-.19a6.464 6.464 0 0 0-.573-.989c-.02-.03-.085-.076-.195-.046l-1.102.303c-.56.153-1.113.008-1.53-.27a4.44 4.44 0 0 0-.501-.29c-.447-.222-.85-.629-.997-1.189l-.289-1.105c-.029-.11-.101-.143-.137-.146a6.6 6.6 0 0 0-1.142 0ZM11 8a3 3 0 1 1-6 0 3 3 0 0 1 6 0ZM9.5 8a1.5 1.5 0 1 0-3.001.001A1.5 1.5 0 0 0 9.5 8Z"/></svg><span class="t" style="left:1251.0px;top:172.8px;font-size:16px;color:#57606a;font-style:italic;letter-spacing:-0.303px;">No description, website, or topics provided.</span><svg class="i" style="left:1251px;top:211.5px;width:16px;height:16px" viewBox="0 0 16 16" fill="#57606a"><path d="M0 1.75A.75.75 0 0 1 .75 1h4.253c1.227 0 2.317.59 3 1.501A3.743 3.743 0 0 1 11.006 1h4.245a.75.75 0 0 1 .75.75v10.5a.75.75 0 0 1-.75.75h-4.507a2.25 2.25 0 0 0-1.591.659l-.622.621a.75.75 0 0 1-1.06 0l-.622-.621A2.25 2.25 0 0 0 5.258 13H.75a.75.75 0 0 1-.75-.75Zm7.251 10.324.004-5.073-.002-2.253A2.25 2.25 0 0 0 5.003 2.5H1.5v9h3.757a3.75 3.75 0 0 1 1.994.574ZM8.755 4.75l-.004 7.322a3.752 3.752 0 0 1 1.992-.572H14.5v-9h-3.495a2.25 2.25 0 0 0-2.25 2.25Z"/></svg><span class="t" style="left:1279.5px;top:212.3px;font-size:14px;color:#57606a;letter-spacing:-0.824px;">Readme</span><svg class="i" style="left:1251px;top:241px;width:16px;height:16px" viewBox="0 0 16 16" fill="#57606a"><path d="M8 .25a.75.75 0 0 1 .673.418l1.882 3.815 4.21.612a.75.75 0 0 1 .416 1.279l-3.046 2.97.719 4.192a.751.751 0 0 1-1.088.791L8 12.347l-3.766 1.98a.75.75 0 0 1-1.088-.79l.72-4.194L.818 6.374a.75.75 0 0 1 .416-1.28l4.21-.611L7.327.668A.75.75 0 0 1 8 .25Zm0 2.445L6.615 5.5a.75.75 0 0 1-.564.41l-3.097.45 2.24 2.184a.75.75 0 0 1 .216.664l-.528 3.084 2.769-1.456a.75.75 0 0 1 .698 0l2.770 1.456-.53-3.084a.75.75 0 0 1 .216-.664l2.24-2.183-3.096-.45a.75.75 0 0 1-.564-.41L8 2.694Z"/></svg><span class="t" style="left:1279.0px;top:241.1px;font-size:14px;color:#57606a;-webkit-text-stroke:0.35px #57606a;">0</span><span class="t" style="left:1290.0px;top:241.1px;font-size:14px;color:#57606a;letter-spacing:-0.386px;">stars</span><svg class="i" style="left:1251px;top:270px;width:16px;height:16px" viewBox="0 0 16 16" fill="#57606a"><path d="M8 2c1.981 0 3.671.992 4.933 2.078 1.27 1.091 2.187 2.345 2.637 3.023a1.62 1.62 0 0 1 0 1.798c-.45.678-1.367 1.932-2.637 3.023C11.67 13.008 9.981 14 8 14c-1.981 0-3.671-.992-4.933-2.078C1.797 10.83.88 9.576.43 8.898a1.62 1.62 0 0 1 0-1.798c.45-.677 1.367-1.931 2.637-3.022C4.33 2.992 6.019 2 8 2ZM1.679 7.932a.12.12 0 0 0 0 .136c.411.622 1.241 1.75 2.366 2.717C5.176 11.758 6.527 12.5 8 12.5c1.473 0 2.825-.742 3.955-1.715 1.124-.967 1.954-2.096 2.366-2.717a.12.12 0 0 0 0-.136c-.412-.621-1.242-1.75-2.366-2.717C10.824 4.242 9.473 3.5 8 3.5c-1.473 0-2.825.742-3.955 1.715-1.124.967-1.954 2.096-2.366 2.717ZM8 10a2 2 0 1 1-.001-3.999A2 2 0 0 1 8 10Z"/></svg><span class="t" style="left:1277.8px;top:269.9px;font-size:14px;color:#57606a;-webkit-text-stroke:0.35px #57606a;">1</span><span class="t" style="left:1290.0px;top:269.9px;font-size:14px;color:#57606a;letter-spacing:-0.209px;">watching</span><svg class="i" style="left:1251px;top:299px;width:16px;height:16px" viewBox="0 0 16 16" fill="#57606a"><path d="M5 5.372v.878c0 .414.336.75.75.75h4.5a.75.75 0 0 0 .75-.75v-.878a2.25 2.25 0 1 1 1.5 0v.878a2.25 2.25 0 0 1-2.25 2.25h-1.5v2.128a2.251 2.251 0 1 1-1.5 0V8.5h-1.5A2.25 2.25 0 0 1 3.5 6.25v-.878a2.25 2.250 0 1 1 1.5 0ZM5 3.25a.75.75 0 1 0-1.5 0 .75.75 0 0 0 1.5 0Zm6.75.75a.75.75 0 1 0 0-1.5.75.75 0 0 0 0 1.5Zm-3 8.75a.75.75 0 1 0-1.5 0 .75.75 0 0 0 1.5 0Z"/></svg><span class="t" style="left:1279.0px;top:298.8px;font-size:14px;color:#57606a;-webkit-text-stroke:0.35px #57606a;">0</span><span class="t" style="left:1290.0px;top:298.8px;font-size:14px;color:#57606a;letter-spacing:-0.011px;">forks</span><div class="b" style="left:1251px;top:340px;width:296px;height:1px;background:#d8dee4"></div><span class="t" style="left:1251.0px;top:369.6px;font-size:16px;color:#24292f;-webkit-text-stroke:0.40px #24292f;letter-spacing:-0.829px;">Releases</span><span class="t" style="left:1251.0px;top:408.8px;font-size:12px;color:#57606a;letter-spacing:-0.123px;">No releases published</span><span class="t" style="left:1251.0px;top:427.1px;font-size:12px;color:#2c5fd2;letter-spacing:-0.288px;">Create a new release</span><div class="b" style="left:1251px;top:465px;width:296px;height:1px;background:#d8dee4"></div><span class="t" style="left:1251.0px;top:494.1px;font-size:16px;color:#24292f;-webkit-text-stroke:0.40px #24292f;letter-spacing:-0.609px;">Packages</span><span class="t" style="left:1251.0px;top:533.6px;font-size:12px;color:#57606a;letter-spacing:-0.063px;">No packages published</span><span class="t" style="left:1251.0px;top:551.8px;font-size:12px;color:#2c5fd2;letter-spacing:-0.080px;">Publish your first package</span><div class="b" style="left:1251px;top:590px;width:296px;height:1px;background:#d8dee4"></div><span class="t" style="left:1251.0px;top:618.9px;font-size:16px;color:#24292f;-webkit-text-stroke:0.40px #24292f;letter-spacing:-0.211px;">Languages</span><div class="b" style="left:1251px;top:655px;width:296px;height:8px;border-radius:6px;overflow:hidden;background:#fff"></div><div class="b" style="left:1251px;top:655px;width:200px;height:8px;background:#3178c6;border-radius:6px 0 0 6px"></div><div class="b" style="left:1453px;top:655px;width:94px;height:8px;background:#e34c26;border-radius:0 6px 6px 0"></div><div class="b" style="left:1255px;top:676px;width:8px;height:8px;background:#3178c6;border-radius:4px"></div><span class="t" style="left:1275.0px;top:674.8px;font-size:12px;color:#24292f;-webkit-text-stroke:0.30px #24292f;letter-spacing:-0.067px;">TypeScript</span><span class="t" style="left:1335.0px;top:674.8px;font-size:12px;color:#57606a;letter-spacing:-0.433px;">68.1%</span><div class="b" style="left:1390.7px;top:676px;width:8px;height:8px;background:#e34c26;border-radius:4px"></div><span class="t" style="left:1411.7px;top:674.8px;font-size:12px;color:#24292f;-webkit-text-stroke:0.30px #24292f;letter-spacing:-0.291px;">HTML</span><span class="t" style="left:1447.5px;top:674.8px;font-size:12px;color:#57606a;letter-spacing:-0.433px;">31.9%</span></body></html>
